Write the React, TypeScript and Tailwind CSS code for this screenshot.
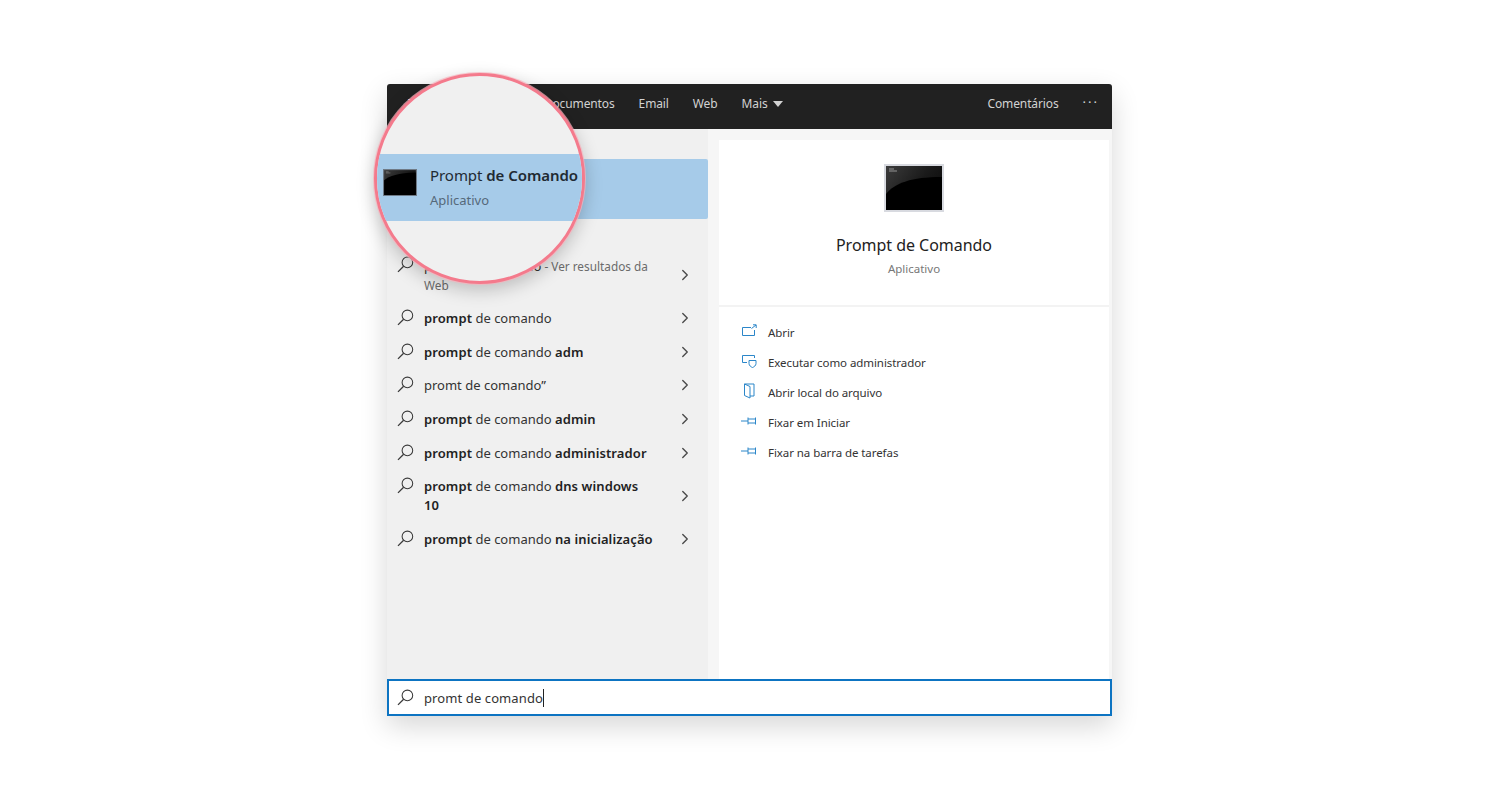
import { ChevronRight } from "lucide-react";

const FONT = "font-['Noto_Sans','Open_Sans',sans-serif]";

function SearchIcon() {
  return (
    <svg width="17" height="17" viewBox="0 0 17 17" fill="none" stroke="#3a3a3a" strokeWidth="1.05" className="shrink-0">
      <circle cx="10.4" cy="6.4" r="5.3" />
      <path d="M6.6 10.2 1 15.9" strokeWidth="1.3" />
    </svg>
  );
}

function CmdIcon({ big }: { big?: boolean }) {
  const id = big ? "cmd-big" : "cmd-small";
  return (
    <svg viewBox="0 0 60 48" className="block w-full h-full" preserveAspectRatio="none">
      <defs>
        <linearGradient id={id} x1="0" y1="0" x2="1" y2="0.6">
          <stop offset="0" stopColor="#3c3c3c" />
          <stop offset="0.6" stopColor="#1a1a1a" />
          <stop offset="1" stopColor="#0c0c0c" />
        </linearGradient>
      </defs>
      <rect x="0" y="0" width="60" height="48" fill={big ? "#d8dae0" : "#6f7a86"} />
      <rect x="2" y="2" width="56" height="44" fill={`url(#${id})`} />
      <path d={big ? "M2 30C11 19 27 13 58 13V46H2Z" : "M2 20C11 12 27 7 58 6V46H2Z"} fill="#000" />
      <path d="M5 5h5M5 7h8" stroke="#bdbdbd" strokeWidth="0.7" />
    </svg>
  );
}

type Part = { t: string; b?: boolean };

const rows: { parts: Part[]; tall?: boolean }[] = [
  { parts: [{ t: "prompt", b: true }, { t: " de comando" }] },
  { parts: [{ t: "prompt", b: true }, { t: " de comando " }, { t: "adm", b: true }] },
  { parts: [{ t: "promt de comando”" }] },
  { parts: [{ t: "prompt", b: true }, { t: " de comando " }, { t: "admin", b: true }] },
  { parts: [{ t: "prompt", b: true }, { t: " de comando " }, { t: "administrador", b: true }] },
  { parts: [{ t: "prompt", b: true }, { t: " de comando " }, { t: "dns windows 10", b: true }], tall: true },
  { parts: [{ t: "prompt", b: true }, { t: " de comando " }, { t: "na inicialização", b: true }] },
];

function Chevron() {
  return <ChevronRight className="w-[18px] h-[18px] text-[#4a4a4a] shrink-0 -mt-[1px]" strokeWidth={1.8} />;
}

function Row({ parts, tall }: { parts: Part[]; tall?: boolean }) {
  return (
    <div className={`flex items-center pl-[10px] pr-[14px] ${tall ? "h-[52.6px]" : "h-[33.7px]"}`}>
      <div className="flex-1 flex items-start gap-[10px] min-w-0">
        <SearchIcon />
        <div className="w-[231px] text-[13px] leading-[19px] text-[#333]">
          {parts.map((p, i) => (
            <span key={i} className={p.b ? "font-semibold tracking-[0.1px] text-[#222]" : ""}>
              {p.t}
            </span>
          ))}
        </div>
      </div>
      <Chevron />
    </div>
  );
}

const stroke = "#2b86c9";

function PinIcon() {
  return (
    <svg width="16" height="10" viewBox="0 0 16 10" fill="none" stroke={stroke} strokeWidth="1">
      <path d="M0 5H7M7 1.500V8.500M7 3H14.500M7 7H14.500M14.500 1.500V8.500" />
    </svg>
  );
}

const actions = [
  {
    label: "Abrir",
    icon: (
      <svg width="16" height="14" viewBox="0 0 16 14" fill="none" stroke={stroke} strokeWidth="1">
        <path d="M10 3.500H1.500V11.500H13.500V6M10.500 4.500 15 1M12 .8h3.200V4" />
      </svg>
    ),
  },
  {
    label: "Executar como administrador",
    icon: (
      <svg width="16" height="14" viewBox="0 0 16 14" fill="none" stroke={stroke} strokeWidth="1">
        <path d="M6 8.500H1.500V1.500H13.500V4M8 6.500h7v3c0 2-2 3.500-3.500 4C10 13 8 11.500 8 9.500Z" />
      </svg>
    ),
  },
  {
    label: "Abrir local do arquivo",
    icon: (
      <svg width="16" height="16" viewBox="0 0 16 16" fill="none" stroke={stroke} strokeWidth="1">
        <path d="M3.500 1H13V13H9M3.500 1V12.500L9 15V3.500L3.500 1Z" />
      </svg>
    ),
  },
  { label: "Fixar em Iniciar", icon: <PinIcon /> },
  { label: "Fixar na barra de tarefas", icon: <PinIcon /> },
];

export default function App() {
  return (
    <div className={`relative w-[1500px] h-[800px] overflow-hidden bg-white pt-[84px] pl-[387px] ${FONT}`}>
      <div className="w-[725px] h-[632px] flex flex-col rounded-t-[3px] bg-[#f6f6f6] shadow-[0_10px_28px_rgba(0,0,0,0.16)]">
        {/* top tabs */}
        <div className="h-[45px] shrink-0 flex items-center rounded-t-[3px] bg-[#212121] pb-[5px] text-[12px] tracking-[-0.12px] text-[#d2d2d2] pl-[21px] pr-[13px] gap-6">
          <span className="-mr-[2px]">Todos</span>
          <span className="-mr-[2px]">Aplicativos</span>
          <span>Documentos</span>
          <span>Email</span>
          <span>Web</span>
          <span className="flex items-center gap-[5px]">
            Mais
            <svg width="10" height="6" viewBox="0 0 10 6" fill="#d2d2d2">
              <path d="M0 0h10L5 6z" />
            </svg>
          </span>
          <span className="ml-auto">Comentários</span>
          <span className="tracking-[2px] text-[13px] leading-none pb-[4px]">···</span>
        </div>

        <div className="flex-1 flex min-h-0">
          {/* results */}
          <div className="w-[321px] shrink-0 bg-[#f0f0f0] pt-[30px]">
            <div className="h-[60px] rounded-r-[2px] bg-[#a6cbe9]" />
            <div className="mt-[30px]">
              <div className="flex items-center pl-[10px] pr-[14px] h-[52.6px]">
                <div className="flex-1 flex items-start gap-[10px] min-w-0">
                  <SearchIcon />
                  <div className="w-[235px] text-[11.8px] leading-[19px] text-[#6b6b6b] pt-[1px]">
                    <span className="text-[13px] text-[#333]">promt de comando</span> - Ver resultados da Web
                  </div>
                </div>
                <Chevron />
              </div>
              {rows.map((r, i) => (
                <Row key={i} parts={r.parts} tall={r.tall} />
              ))}
            </div>
          </div>

          {/* detail */}
          <div className="flex-1 pt-[11px] pl-[11px] pr-[3px]">
            <div className="h-full bg-white">
              <div className="h-[167px] border-b-2 border-[#f3f3f3] flex flex-col items-center pt-[24px]">
                <div className="w-[60px] h-[48px]">
                  <CmdIcon big />
                </div>
                <div className="mt-[21px] text-[16px] leading-[24px] text-[#222] tracking-[-0.03px]">Prompt de Comando</div>
                <div className="mt-[4px] text-[11.5px] leading-[16px] text-[#777]">Aplicativo</div>
              </div>
              <div className="pt-[11px] pl-[22px]">
                {actions.map((a) => (
                  <div key={a.label} className="h-[30px] flex items-center gap-[11px]">
                    <div className="w-[16px] h-[16px] flex items-center justify-center -mt-[4px]">{a.icon}</div>
                    <span className="text-[11.5px] tracking-[-0.07px] text-[#333]">{a.label}</span>
                  </div>
                ))}
              </div>
            </div>
          </div>
        </div>

        {/* search box */}
        <div className="h-[37px] shrink-0 flex items-center gap-[10px] border-2 border-[#0d74c2] bg-white pl-[8px]">
          <SearchIcon />
          <span className="text-[13px] tracking-[0.1px] text-[#333] border-r border-[#222] leading-[18px]">promt de comando</span>
        </div>
      </div>

      {/* magnifier over the best match */}
      <div className="absolute left-[374px] top-[73px] w-[211px] h-[211px] overflow-hidden rounded-full border-[3px] border-[#f47a8c] bg-[#f0f0f0] shadow-[0_0_0_1px_rgba(248,180,190,0.7),0_6px_18px_rgba(0,0,0,0.22)]">
        <div className="absolute left-0 right-0 top-[78px] h-[67px] bg-[#a6cbe9]" />
        <div className="absolute left-[6px] top-[93px] w-[34px] h-[27px]">
          <CmdIcon />
        </div>
        <div className="absolute left-[53px] top-[88px] text-[15px] leading-[22px] tracking-[-0.05px] text-[#1f2a33] whitespace-nowrap">
          Prompt <span className="font-semibold">de Comando</span>
        </div>
        <div className="absolute left-[53px] top-[115px] text-[13px] leading-[18px] text-[#55697a]">Aplicativo</div>
      </div>
    </div>
  );
}
